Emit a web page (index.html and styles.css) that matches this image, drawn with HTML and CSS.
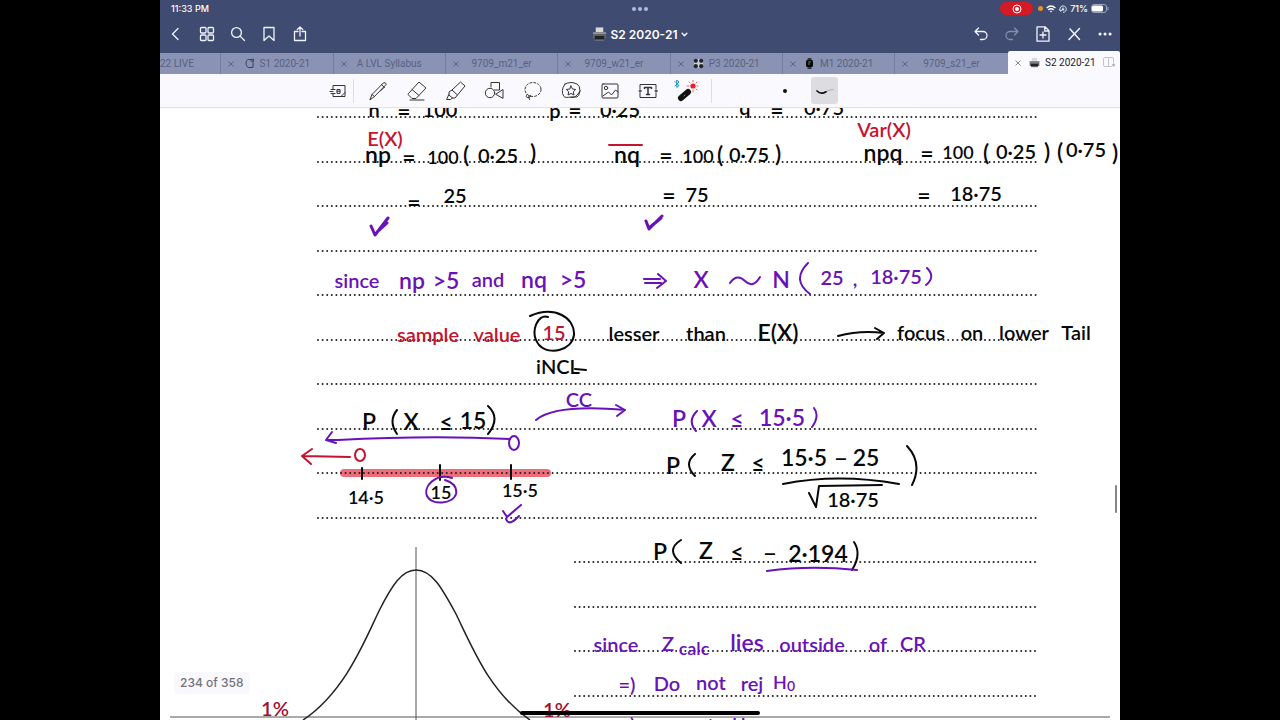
FILE: index.html
```html
<!DOCTYPE html>
<html lang="en">
<head>
<meta charset="utf-8">
<meta name="viewport" content="width=device-width, initial-scale=1">
<title>S2 2020-21</title>
<link rel="stylesheet" href="styles.css">
</head>
<body>
<svg class="defs" aria-hidden="true">
  <symbol id="printer" viewBox="0 0 16 16">
    <path d="M4 1h8v6H4z" fill="#d9dcd6"/><path d="M1 6h14v7H1z" fill="#62666b"/><path d="M1 6h14v2H1z" fill="#8d9094"/><path d="M3 10h10v4H3z" fill="#202226"/><path d="M3 14h10v1H3z" fill="#888"/>
  </symbol>
  <symbol id="close" viewBox="0 0 8 8"><path d="M1.500 1.500l5 5M6.500 1.500l-5 5" stroke="currentColor" fill="none"/></symbol>
</svg>
<main class="app">
  <header class="top">
    <div class="status">
      <span class="time">11:33 PM</span>
      <span class="grip"><i></i><i></i><i></i></span>
      <span class="signals">
        <span class="rec"><svg width="10" height="10" viewBox="0 0 10 10"><circle cx="5" cy="5" r="4" fill="none" stroke="#fff"/><circle cx="5" cy="5" r="2" fill="#fff"/></svg></span>
        <span class="mic"></span>
        <svg width="10" height="8" viewBox="0 0 10 8" fill="none" stroke="#fff" stroke-width="1.4"><path d="M.6 3Q5-.8 9.400 3M2.300 4.900Q5 2.600 7.700 4.900"/><path d="M5 7.500L3.800 6.100Q5 5.300 6.200 6.100z" fill="#fff" stroke="none"/></svg>
        <svg width="8" height="8" viewBox="0 0 8 8" fill="none" stroke="#e6e9f2"><path d="M1.500 6A3.200 3.200 0 1 1 4 7.300M.5 4.500l1 1.700 1.500-1"/><path d="M2.800 3.800h2.400v1.600H2.800z" fill="#e6e9f2" stroke="none"/><path d="M3.300 3.800v-.9h1.400v.9" stroke-width=".6"/></svg>
        <span>71%</span>
        <svg width="18" height="9" viewBox="0 0 18 9"><rect x=".5" y=".5" width="15" height="8" rx="2.500" fill="none" stroke="#9ca5bf"/><rect x="1" y="1.500" width="11" height="6" rx="1.500" fill="#fff"/><path d="M17 3v3" stroke="#9ca5bf"/></svg>
      </span>
    </div>
    <nav class="nav">
      <div class="group">
        <button aria-label="Back"><svg viewBox="0 0 16 16"><path d="M10 2.500L4.500 8l5.500 5.500"/></svg></button>
        <button aria-label="Pages"><svg viewBox="0 0 16 16"><rect x="1.500" y="1.500" width="5.500" height="5.500" rx="1"/><rect x="9" y="1.500" width="5.500" height="5.500" rx="1"/><rect x="1.500" y="9" width="5.500" height="5.500" rx="1"/><rect x="9" y="9" width="5.500" height="5.500" rx="1"/></svg></button>
        <button aria-label="Search"><svg viewBox="0 0 16 16"><circle cx="6.500" cy="6.500" r="4.900"/><path d="M10.100 10.100L14.500 14.500"/></svg></button>
        <button aria-label="Bookmark"><svg viewBox="0 0 16 16"><path d="M3 1.500h10v13L8 10l-5 4.500z"/></svg></button>
        <button aria-label="Share"><svg viewBox="0 0 16 16"><path d="M6 5.500H2.500v9h11v-9H10M8 10V1M5.300 3.500L8 1l2.700 2.500"/></svg></button>
      </div>
      <button class="title"><svg class="pic"><use href="#printer"/></svg>S2 2020-21<svg class="chev" viewBox="0 0 6 6"><path d="M1 2l2 2 2-2"/></svg></button>
      <div class="group">
        <button aria-label="Undo"><svg viewBox="0 0 16 16"><path d="M5.500 2L2 5.500 5.500 9M2.300 5.500H10a4 4 0 0 1 0 8H7.500"/></svg></button>
        <button aria-label="Redo" class="off"><svg viewBox="0 0 16 16"><path d="M10.500 2L14 5.500 10.500 9M13.700 5.500H6a4 4 0 0 0 0 8h2.500"/></svg></button>
        <button aria-label="Add page"><svg viewBox="0 0 16 16"><path d="M2 .8h8l4 4v10.400H2zM9.700.8V5H14M8 6v6M5 9h6"/></svg></button>
        <button aria-label="Read mode"><svg viewBox="0 0 16 16"><path d="M4 3l9.500 10.500M13.500 2.500L3 13.500" stroke-width="1.500"/></svg></button>
        <button aria-label="More"><svg viewBox="0 0 16 16"><path d="M3 8h.1M8 8h.1M13 8h.1" stroke-width="3"/></svg></button>
      </div>
    </nav>
    <div class="tabs">
      <button class="tab first"><b>22 LIVE</b></button>
      <button class="tab"><svg class="x"><use href="#close"/></svg><b><svg class="ico" viewBox="0 0 11 11" fill="none" stroke="#39445f"><path d="M7 1.500H4Q2 2 2 5t2 4.500h5V3M7 1.500L9.500 1v2H7z"/></svg>S1 2020-21</b></button>
      <button class="tab"><svg class="x"><use href="#close"/></svg><b>A LVL Syllabus</b></button>
      <button class="tab"><svg class="x"><use href="#close"/></svg><b>9709_m21_er</b></button>
      <button class="tab"><svg class="x"><use href="#close"/></svg><b>9709_w21_er</b></button>
      <button class="tab"><svg class="x"><use href="#close"/></svg><b><svg class="ico" viewBox="0 0 11 11"><path d="M1 1h9v9H1z" fill="#c9cddb"/><g fill="#202329"><circle cx="2.800" cy="2.800" r="2.100"/><circle cx="8.200" cy="2.800" r="2.100"/><circle cx="2.800" cy="8.200" r="2.100"/><circle cx="8.200" cy="8.200" r="2.100"/></g></svg>P3 2020-21</b></button>
      <button class="tab"><svg class="x"><use href="#close"/></svg><b><svg class="ico" viewBox="0 0 11 11"><path d="M3.500 0h4v11h-4z" fill="#333740"/><rect x="2" y="2" width="7" height="7" rx="1.500" fill="#08090b"/><path d="M4 4h3M4 6h2" stroke="#777"/></svg>M1 2020-21</b></button>
      <button class="tab"><svg class="x"><use href="#close"/></svg><b>9709_s21_er</b></button>
      <button class="tab active"><svg class="x"><use href="#close"/></svg><b><svg class="ico"><use href="#printer"/></svg>S2 2020-21</b><svg class="split" viewBox="0 0 13 11" fill="none" stroke="#c3c3cc"><rect x=".5" y=".5" width="10" height="9" rx="1.500"/><path d="M5.500.5v9"/><circle cx="10.500" cy="8" r="2" fill="#b5b5bd" stroke="#faf9fd"/></svg></button>
    </div>
  </header>
  <div class="tools">
    <button class="reader" aria-label="Zoom window"><svg viewBox="0 0 18 18"><path d="M4 7V3.500h12v11H4V12M2 7.500h4M1 9.500h3M2 11.500h4M8 11V7.500h3V11zM8 9.200h3M12 14.500l4-4" /></svg></button>
    <span class="sep"></span>
    <div class="set">
      <button aria-label="Pen"><svg viewBox="0 0 20 20"><path d="M2 18.500l2-5L15.500 1.800q2-.8 2.800 1.500L6.500 15.500zM13.500 3.500l3 3M4 13.500l2.500 2M16 6.500l-3.500 3.500"/></svg></button>
      <button aria-label="Eraser"><svg viewBox="0 0 20 20"><path d="M1.500 12.500L12 1l7 6L9 17.500H5L1.500 14zM5 8.500l7 6M3 19h14"/></svg></button>
      <button aria-label="Highlighter"><svg viewBox="0 0 20 20"><path d="M1 18.500h3.500l2-1.500-3.500-3zM3 14V11l3-2 5.500 5-2.500 3H6.500M6 9l8.500-8 4.500 4-7.500 9"/></svg></button>
      <button aria-label="Shapes"><svg viewBox="0 0 20 20"><path d="M7 6V1.500h8.500V9h-5M12 13l7-4.500V17z"/><circle cx="6" cy="12" r="4.700"/></svg></button>
      <button aria-label="Lasso"><svg viewBox="0 0 20 20"><ellipse cx="10" cy="8.500" rx="8" ry="7" stroke-dasharray="2 2"/><path d="M4 13.500q-2 3 1 3t2.500-2q-3 0-1 4"/></svg></button>
      <button aria-label="Elements"><svg viewBox="0 0 20 20"><path d="M4 3q6-3 12 0 3 1.500 3 7-1 5.500-3 6H10Q4 17 3 15.500-1 10 4 3zM10 16.500q5 1 9-6.500"/><path d="M10 5l1.500 3 3.200.5-2.300 2.200.5 3.300-2.900-1.600L7.100 14l.5-3.300-2.300-2.200L8.500 8z"/></svg></button>
      <button aria-label="Image"><svg viewBox="0 0 20 20"><rect x="2" y="3" width="16" height="14" rx="1"/><circle cx="6" cy="7" r="1.700"/><path d="M3 15l5.500-4 3 3 4-5 2.500 2"/></svg></button>
      <button aria-label="Text"><svg viewBox="0 0 20 20"><path d="M2 8V3.500h16V8M2 12v4.500h16V12"/><circle cx="2" cy="10" r="1"/><circle cx="18" cy="10" r="1"/><path d="M6.500 7.500V6.500h7v1M10 6.500v7M8.500 13.500h3" stroke-width="1.500"/></svg></button>
      <button aria-label="Laser pointer"><svg class="laser" viewBox="0 0 26 22"><path d="M7 18l7-6" stroke="#111" stroke-width="6"/><path d="M10 16l1-1" stroke="#888"/><circle cx="19" cy="6" r="2.600" fill="#e32227" stroke="none"/><path d="M19 0v2M19 10v2M13 6h2M23 6h1M15 2l1 1M22 9l1 1M23 2l-1 1" stroke="#e96a6e"/><path d="M1 1.500l4 4-2.200 2V0L5 2 1 6" stroke="#1489cf"/></svg></button>
    </div>
    <span class="sep"></span>
    <button class="size" aria-label="Stroke size"><i></i></button>
    <button class="stroke" aria-label="Stroke style"><svg viewBox="0 0 20 10"><path d="M2 5q4 4 8 1.300T18 3.500" stroke="#aaa"/><path d="M2 5q4 4 9 .8" stroke="#111" stroke-width="1.700"/></svg></button>
  </div>
  <section class="page">
    <svg class="canvas" viewBox="160 108 960 612" preserveAspectRatio="xMidYMin slice" role="img" aria-label="Handwritten notes">
      <path class="dots" d="M318 117H1038M318 162H1038M318 206H1038M318 251H1038M318 295H1038M318 340H1038M318 384H1038M318 429H1038M318 518H1038M575 562H1038M575 607H1038M575 651H1038M575 696H1038"/>
      <path class="marker" d="M344 473H547"/>
      <path class="dots" d="M318 473H1038"/>
      <path class="axis" d="M416 547V720M170 717H1110"/>
      <path class="curve" d="M303 720C345 692 365 640 379 611C392 585 402 570 416 570C432 570 442 588 456 614C474 651 490 692 530 720"/>
      <g class="ink black">
        <g class="l"><text x="374" y="117">n</text><text x="440" y="117">100</text><text x="555" y="118">p</text><text x="620" y="117">0·25</text><text x="745" y="115">q</text><text x="824" y="115">0·75</text></g>
        <g class="xl"><text x="404" y="120">=</text><text x="575" y="119">=</text><text x="777" y="119">=</text><text x="409" y="166">=</text><text x="666" y="164">=</text><text x="927" y="162">=</text><text x="414" y="211">=</text><text x="669" y="204">=</text><text x="924" y="204">=</text></g>
        <g class="m"><text x="443" y="164">100</text><text x="698" y="163">100</text><text x="958" y="159">100</text></g>
        <g class="l"><text x="498" y="163">0·25</text><text x="749" y="162">0·75</text><text x="1016" y="159">0·25</text><text x="1086" y="157">0·75</text></g>
        <g class="xl"><text x="466" y="163">(</text><text x="533" y="161">)</text><text x="720" y="163">(</text><text x="778" y="162">)</text><text x="986" y="161">(</text><text x="1047" y="160">)</text><text x="1060" y="160">(</text><text x="1115" y="161">)</text></g>
        <g class="xl"><text x="378" y="163">np</text><text x="627" y="163">nq</text><text x="883" y="161">npq</text></g>
        <g class="l"><text x="455" y="203">25</text><text x="697" y="202">75</text><text x="976" y="201">18·75</text>
        <text x="634" y="341">lesser</text><text x="706" y="341">than</text><text x="921" y="340">focus</text><text x="972" y="340">on</text><text x="1024" y="340">lower</text><text x="1076" y="340">Tail</text></g>
        <text class="xl" x="778" y="341">E(X)</text>
        <text class="l" x="558" y="374">iNCL</text>
        <g class="xl"><text x="369" y="430">P</text><text x="411" y="430">X</text><text x="446" y="431">≤</text><text x="473" y="429">15</text></g>
        <g class="m"><text x="366" y="504">14·5</text><text x="441" y="499">15</text><text x="520" y="497">15·5</text></g>
        <g class="xl"><text x="673" y="474">P</text><text x="728" y="471">Z</text><text x="758" y="472">≤</text><text x="804" y="466">15·5</text><text x="841" y="467">−</text><text x="866" y="466">25</text><text x="660" y="560">P</text><text x="706" y="559">Z</text><text x="737" y="561">≤</text><text x="770" y="562">−</text></g>
        <g class="l"><text x="853" y="507">18·75</text></g>
        <text class="xl" x="818" y="562">2·194</text>
      </g>
      <g class="ink red">
        <text class="l" x="385" y="146">E(X)</text><text class="l" x="884" y="137">Var(X)</text>
        <text class="l" x="428" y="342">sample</text><text class="l" x="497" y="342">value</text><text class="l" x="554" y="340">15</text>
      </g>
      <g class="ink purple">
        <g class="l"><text x="357" y="288">since</text><text x="488" y="287">and</text><text x="832" y="285">25</text><text x="855" y="286">,</text><text x="896" y="284">18·75</text><text x="579" y="407">CC</text>
        <text x="616" y="652">since</text><text x="668" y="651">Z</text><text x="812" y="652">outside</text><text x="878" y="652">of</text><text x="913" y="651">CR</text>
        <text x="667" y="691">Do</text><text x="711" y="690">not</text><text x="752" y="691">rej</text></g>
        <g class="xl"><text x="412" y="289">np</text><text x="446" y="289">&gt;5</text><text x="534" y="288">nq</text><text x="573" y="288">&gt;5</text><text x="701" y="288">X</text><text x="781" y="288">N</text><text x="679" y="427">P</text><text x="709" y="427">X</text><text x="737" y="428">≤</text><text x="782" y="426">15·5</text><text x="747" y="651">lies</text></g>
        <g class="m"><text x="694" y="655">calc</text><text x="780" y="689">H</text><text class="s" x="791" y="691">0</text><text x="688" y="731">accept</text><text x="739" y="731">H</text></g>
        <g class="l"><text x="627" y="692">=)</text><text x="627" y="732">=)</text></g>
      </g>
      <g class="ink dark"><text class="l" x="275" y="716">1%</text><text class="l" x="557" y="717">1%</text></g>
      <g class="line black">
        <path d="M530 316C555 305 575 318 574 335C572 350 550 356 539 345C529 332 538 313 548 317M838 336Q860 330 884 333M875 328l9 5-7 6M575 369l11 1"/>
        <path d="M397 410q-9 11 0 24M488 406q13 12 0 28M362 468v11M440 465v15M511 465v14"/>
        <path d="M695 454q-12 10 0 22M907 446q16 17 5 39M783 484Q838 473 899 484M809 493l7 14 3-21 63-1M681 540q-16 10 0 23M854 542q8 12-2 28"/>
      </g>
      <g class="line purple">
        <path class="tick" d="M371 226l4 9 13-17M375 234l12-11M646 221l3 8 13-13M649 228l12-10"/>
        <path d="M644 279h16M645 283h16M658 274l8 7-9 7M730 283q7-10 15-2t15-4M808 263q-17 17 2 31M927 268q9 9-1 17"/>
        <path d="M328 440h10Q430 435 510 439M332 432l-6 8 10 3M536 420Q555 404 625 410M616 405l9 5-8 6"/><ellipse cx="514" cy="443" rx="5" ry="7"/>
        <path d="M452 478C436 473 423 486 427 496C432 506 453 504 456 494Q458 484 445 480M503 511l4 6 14-12M506 519q3 8 13-3M697 411q-10 10-1 20M814 408q6 8-2 19M767 571Q810 565 857 570"/>
      </g>
      <g class="line red"><path d="M303 456l47 1M312 449l-10 7 9 8M609 145h33"/><ellipse cx="360" cy="455" rx="5" ry="6"/></g>
    </svg>
    <span class="count">234 of 358</span>
    <span class="scroll"></span>
    <span class="home"></span>
  </section>
</main>
</body>
</html>
```
FILE: styles.css
```css
* { box-sizing: border-box; }
body { margin: 0; background: #000; font-family: Inter, "Liberation Sans", sans-serif; }
button { border: 0; padding: 0; margin: 0; background: none; font: inherit; color: inherit; }
svg { display: block; flex: none; }
.defs { position: absolute; width: 0; height: 0; }
.app { width: 75%; min-height: 100vh; margin: 0 auto; display: flex; flex-direction: column; background: #fff; overflow: hidden; }
.top { background: #3f4b70; color: #fff; }

.status { display: grid; grid-template-columns: 1fr auto 1fr; align-items: center; height: 17px; padding: 0 11px; font-size: 9px; font-weight: 500; }
.grip { display: flex; gap: 2px; }
.grip i { width: 4px; height: 4px; border-radius: 50%; background: #b3bdda; }
.signals { display: flex; align-items: center; justify-content: flex-end; gap: 3px; }
.rec { display: grid; place-items: center; width: 33px; height: 13px; border-radius: 7px; background: #d51a26; margin-right: 2px; }
.mic { width: 5px; height: 5px; border-radius: 50%; background: #e8912c; }

.nav { display: grid; grid-template-columns: 1fr auto 1fr; align-items: center; height: 34px; }
.group { display: flex; }
.group:last-child { justify-content: flex-end; }
.group button { width: 31px; height: 30px; display: grid; place-items: center; }
.group svg { width: 16px; height: 16px; }
.group svg, .chev { fill: none; stroke: #f1f4ff; stroke-width: 1.3; stroke-linecap: round; stroke-linejoin: round; }
.off { opacity: .4; }
.title { display: flex; align-items: center; gap: 4px; font-size: 12px; font-weight: 600; }
.pic { width: 15px; height: 16px; }
.chev { width: 7px; height: 7px; }

.tabs { display: grid; grid-template-columns: 61fr repeat(8, minmax(0, 112fr)); align-items: end; height: 23px; font-family: Roboto, "Liberation Sans", sans-serif; font-size: 10px; color: #59617f; }
.tab { display: flex; align-items: center; height: 21px; padding: 0 14px 0 6px; background: #8b93b5; border-right: 1px solid #747d9f; white-space: nowrap; overflow: hidden; }
.tab b { flex: 1; display: flex; justify-content: center; align-items: center; gap: 5px; font-weight: 400; }
.tab.first { padding: 0; }
.first b { justify-content: flex-start; }
.tab:nth-child(8) { border-right: 0; }
.x { width: 8px; height: 8px; }
.ico { width: 11px; height: 11px; }
.split { width: 13px; height: 11px; }
.tab.active { height: 23px; padding-right: 4px; background: #faf9fd; color: #222; border: 0; border-radius: 2px 2px 0 0; }
.active .x { color: #888; }

.tools { display: flex; align-items: center; height: 34px; padding-left: 17%; background: #faf9fd; border-bottom: 1px solid #dfdfe4; }
.tools svg { fill: none; stroke: #333; stroke-linecap: round; stroke-linejoin: round; width: 20px; height: 20px; }
.tools button { display: grid; place-items: center; }
.tools .reader { width: 30px; }
.tools .reader svg { width: 18px; height: 18px; }
.sep { width: 1px; height: 24px; background: #dddde3; }
.set { display: grid; grid-template-columns: repeat(9, 1fr); width: 347px; margin: 0 5px; }
.tools .laser { width: 26px; height: 22px; }
.size { width: 27px; height: 27px; margin-left: 59px; }
.size i { width: 4px; height: 4px; border-radius: 50%; background: #111; }
.stroke { width: 27px; height: 27px; margin-left: 13px; border-radius: 3px; background: #dddce0; }

.page { position: relative; flex: 1; display: flex; min-height: 0; }
.canvas { flex: 1; width: 100%; min-width: 0; }
.dots { fill: none; stroke: #222; stroke-width: 2; stroke-linecap: round; stroke-dasharray: 0 4.6; }
.marker { stroke: #ed6d7b; stroke-width: 8; stroke-linecap: round; }
.axis { fill: none; stroke: #555; stroke-width: 1; }
.curve { fill: none; stroke: #222; stroke-width: 1.5; }
.ink { font-family: Lato, "Open Sans", sans-serif; font-weight: 600; text-anchor: middle; }
.black { fill: #080808; stroke: #080808; }
.red { fill: #c4142f; stroke: #c4142f; }
.purple { fill: #6912b8; stroke: #6912b8; }
.dark { fill: #a00f32; }
.ink.black, .ink.red, .ink.purple { stroke: none; }
.line { stroke-width: 2; stroke-linecap: round; stroke-linejoin: round; }
.line path, .line ellipse { fill: none; }
.line .tick { stroke-width: 3; }
.m { font-size: 18px; }
.l { font-size: 20px; }
.xl { font-size: 23px; }
.ink .s { font-size: 14px; }
.count { position: absolute; left: 14px; bottom: 26px; padding: 2px 6px; border-radius: 4px; background: #f9f8fc; color: #737378; font-size: 12px; line-height: 18px; font-weight: 500; }
.scroll { position: absolute; right: 3px; bottom: 207px; width: 2px; height: 28px; border-radius: 1px; background: #858589; }
.home { position: absolute; left: 50%; bottom: 5px; width: 25%; height: 4px; margin-left: -12.5%; border-radius: 2px; background: #000; }
```
